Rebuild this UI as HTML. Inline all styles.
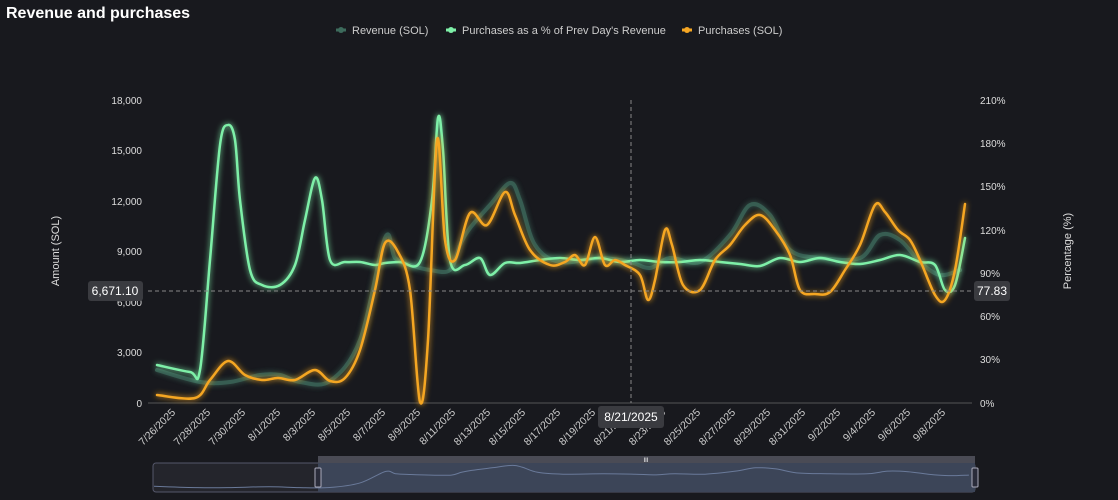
<!DOCTYPE html>
<html><head><meta charset="utf-8"><style>
body{margin:0;background:#18191e;width:1118px;height:500px;overflow:hidden;font-family:"Liberation Sans",sans-serif;}
svg{position:absolute;left:0;top:0}
</style></head><body>
<svg width="1118" height="500" viewBox="0 0 1118 500" xmlns="http://www.w3.org/2000/svg" font-family="Liberation Sans, sans-serif">
<defs>
<filter id="g1" x="-10%" y="-10%" width="120%" height="120%"><feGaussianBlur stdDeviation="3" result="b"/><feMerge><feMergeNode in="b"/><feMergeNode in="SourceGraphic"/></feMerge></filter>
</defs>
<text x="6" y="18" fill="#fff" font-size="16" font-weight="bold">Revenue and purchases</text>
<g font-size="11" fill="#ccc">
<line x1="336" y1="30" x2="346" y2="30" stroke="#3d6b5c" stroke-width="3"/><circle cx="341" cy="30" r="3" fill="#3d6b5c"/>
<text x="352" y="34">Revenue (SOL)</text>
<line x1="446" y1="30" x2="456" y2="30" stroke="#7ef0a8" stroke-width="3"/><circle cx="451" cy="30" r="3" fill="#7ef0a8"/>
<text x="462" y="34">Purchases as a % of Prev Day's Revenue</text>
<line x1="682" y1="30" x2="692" y2="30" stroke="#f5a623" stroke-width="3"/><circle cx="687" cy="30" r="3" fill="#f5a623"/>
<text x="698" y="34">Purchases (SOL)</text>
</g>
<line x1="148" y1="403" x2="972" y2="403" stroke="#555"/>
<g font-size="10" fill="#ddd" text-anchor="end">
<text x="142" y="104">18,000</text><text x="142" y="154">15,000</text><text x="142" y="205">12,000</text><text x="142" y="255">9,000</text><text x="142" y="306">6,000</text><text x="142" y="356">3,000</text><text x="142" y="407">0</text>
</g>
<g font-size="10" fill="#ddd">
<text x="980" y="104">210%</text><text x="980" y="147">180%</text><text x="980" y="190">150%</text><text x="980" y="234">120%</text><text x="980" y="277">90%</text><text x="980" y="320">60%</text><text x="980" y="363">30%</text><text x="980" y="407">0%</text>
</g>
<text transform="translate(59,251) rotate(-90)" font-size="11" fill="#ddd" text-anchor="middle">Amount (SOL)</text>
<text transform="translate(1071,251) rotate(-90)" font-size="11" fill="#ddd" text-anchor="middle">Percentage (%)</text>
<g id="xl" font-size="10.5" fill="#ccc" text-anchor="end"></g>
<path id="rev" fill="none" stroke="#3d6b5c" stroke-width="4" stroke-linecap="round" opacity="0.85" filter="url(#g1)"/>
<path id="pct" fill="none" stroke="#7ef0a8" stroke-width="2.5" stroke-linecap="round" filter="url(#g1)"/>
<path id="pur" fill="none" stroke="#f5a623" stroke-width="2.5" stroke-linecap="round" filter="url(#g1)"/>
<line x1="631" y1="100" x2="631" y2="403" stroke="#888" stroke-dasharray="4,3"/>
<line x1="148" y1="291" x2="972" y2="291" stroke="#888" stroke-dasharray="4,3"/>
<rect x="88" y="281" width="55" height="20" rx="3" fill="#3a3b40"/><text x="115" y="295" font-size="12" fill="#fff" text-anchor="middle">6,671.10</text>
<rect x="974" y="281" width="36" height="20" rx="3" fill="#3a3b40"/><text x="992" y="295" font-size="12" fill="#fff" text-anchor="middle">77.83</text>
<rect x="598" y="406" width="66" height="22" rx="3" fill="#3a3b40"/><text x="631" y="421" font-size="12" fill="#fff" text-anchor="middle">8/21/2025</text>
<rect x="153" y="463" width="822" height="29" rx="3" fill="#24252c" stroke="#55576a"/>
<rect x="318" y="456" width="657" height="7" fill="#4a4b55"/>
<rect x="318" y="463" width="657" height="29" fill="#3c4558"/>
<path id="ov" fill="none" stroke="#6a7a9a" stroke-width="1"/>
<rect x="315" y="468" width="6" height="19" rx="1" fill="#2a2c3a" stroke="#aab"/>
<rect x="972" y="468" width="6" height="19" rx="1" fill="#2a2c3a" stroke="#aab"/>
<text x="646" y="462" font-size="6" fill="#fff" text-anchor="middle">III</text>
</svg>
<script>
function sm(p){let d="M"+p[0][0]+","+p[0][1];for(let i=0;i<p.length-1;i++){const a=p[i-1]||p[i],b=p[i],c=p[i+1],e=p[i+2]||c;d+=" C"+(b[0]+(c[0]-a[0])/6)+","+(b[1]+(c[1]-a[1])/6)+" "+(c[0]-(e[0]-b[0])/6)+","+(c[1]-(e[1]-b[1])/6)+" "+c[0]+","+c[1];}return d;}
const pur=[[157,395],[195,398],[210,380],[228,361],[245,375],[262,380],[278,378],[295,380],[315,370],[330,381],[345,378],[360,350],[375,290],[385,243],[398,252],[410,290],[420,402],[428,340],[437,140],[445,240],[455,260],[470,213],[487,225],[505,192],[515,215],[530,250],[550,265],[565,262],[575,255],[585,265],[595,237],[605,265],[615,260],[625,265],[640,275],[648,300],[655,280],[665,230],[672,245],[683,285],[700,290],[715,260],[730,245],[745,225],[760,215],[775,230],[790,255],[800,290],[815,294],[830,292],[845,270],[860,245],[875,205],[885,212],[898,230],[910,240],[920,260],[935,295],[945,300],[955,270],[965,204]];
const pct=[[157,365],[190,372],[200,370],[210,260],[220,145],[228,125],[235,140],[240,200],[250,270],[262,285],[280,285],[295,265],[305,220],[315,178],[322,200],[330,260],[345,262],[360,262],[375,265],[385,263],[400,262],[420,262],[432,200],[438,118],[443,150],[450,260],[465,265],[480,258],[490,275],[505,263],[520,263],[540,260],[560,258],[580,260],[600,258],[620,262],[640,260],[660,262],[680,262],[700,260],[720,262],[740,264],[760,266],[780,258],[800,262],[820,258],[840,262],[860,264],[880,260],[900,255],[920,262],[935,265],[945,290],[955,285],[965,238]];
const rev=[[157,370],[200,382],[230,382],[260,375],[280,375],[300,382],[330,381],[360,340],[385,238],[395,258],[410,265],[430,270],[450,270],[460,245],[470,228],[490,205],[510,183],[520,200],[535,245],[560,262],[600,258],[630,262],[650,268],[670,258],[700,262],[730,235],[750,205],[770,215],[790,250],[820,258],[860,258],[880,235],[900,240],[920,262],[940,275],[960,270]];
document.getElementById("pur").setAttribute("d",sm(pur));
document.getElementById("pct").setAttribute("d",sm(pct));
document.getElementById("rev").setAttribute("d",sm(rev));
const ov=rev.map(p=>[154+(p[0]-157)/(965-157)*820,465+(p[1]-180)/(403-180)*25]);
document.getElementById("ov").setAttribute("d",sm(ov));
const labs=["7/26/2025","7/28/2025","7/30/2025","8/1/2025","8/3/2025","8/5/2025","8/7/2025","8/9/2025","8/11/2025","8/13/2025","8/15/2025","8/17/2025","8/19/2025","8/21/2025","8/23/2025","8/25/2025","8/27/2025","8/29/2025","8/31/2025","9/2/2025","9/4/2025","9/6/2025","9/8/2025"];
let h="";labs.forEach((l,i)=>{const x=176+i*35;h+=`<text transform="translate(${x},413) rotate(-45)">${l}</text>`;});
document.getElementById("xl").innerHTML=h;
</script>
</body></html>
